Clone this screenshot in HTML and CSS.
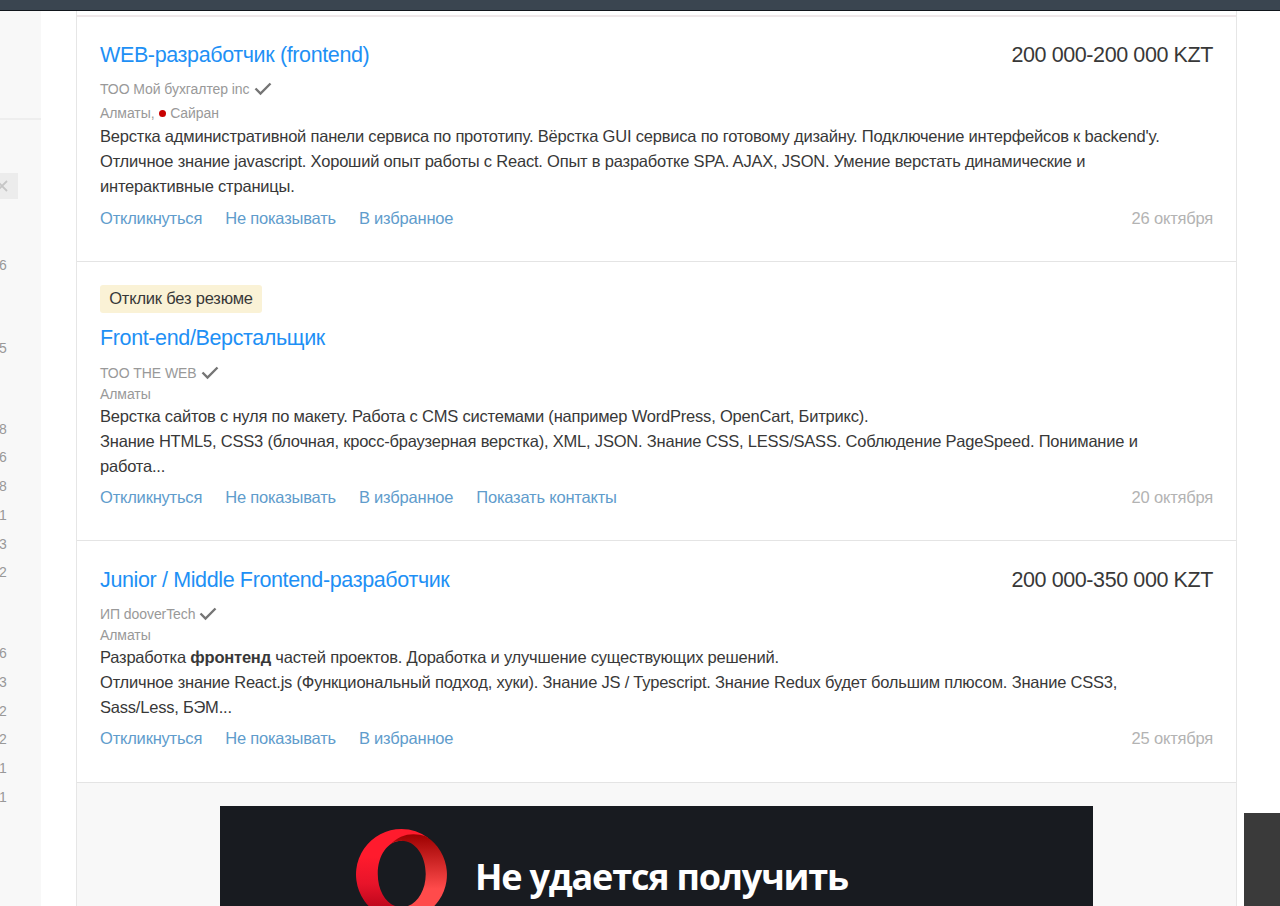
FILE: index.html
```html
<!DOCTYPE html>
<html lang="ru">
<head>
  <meta charset="UTF-8" />
  <meta name="viewport" content="width=device-width, initial-scale=1.0"/>
  <title>Вакансии</title>
  <link rel="stylesheet" href="styles.css">
</head>
<body>

  <header class="topbar"></header>

  <div class="page">
    <aside class="sidebar">
      <div class="sidebar-head"></div>
      <div class="chip">
        <svg width="12" height="12" viewBox="0 0 12 12"><path d="M1 1L11 11M11 1L1 11" stroke="#c6c6c6" stroke-width="1.8" fill="none"/></svg>
      </div>
      <ul class="counts counts-single"><li>6</li></ul>
      <ul class="counts counts-second"><li>5</li></ul>
      <ul class="counts counts-long">
        <li>8</li><li>6</li><li>8</li><li>1</li><li>3</li><li>2</li>
      </ul>
      <ul class="counts">
        <li>6</li><li>3</li><li>2</li><li>2</li><li>1</li><li>1</li>
      </ul>
    </aside>

    <main class="list">
      <article class="vacancy first">
        <div class="vacancy-head">
          <a class="title">WEB-разработчик (frontend)</a>
          <span class="salary">200 000-200 000 KZT</span>
        </div>
        <div class="company"><span>ТОО Мой бухгалтер inc</span>
          <svg class="check" width="18" height="14" viewBox="0 0 18 14"><path d="M1.5 6.5L6.5 11.5L16.5 1.5" /></svg>
        </div>
        <div class="location metro">Алматы, <i class="dot"></i> Сайран</div>
        <p class="text">
          Верстка административной панели сервиса по прототипу. Вёрстка GUI сервиса по готовому дизайну. Подключение интерфейсов к backend'y.<br>
          Отличное знание javascript. Хороший опыт работы с React. Опыт в разработке SPA. AJAX, JSON. Умение верстать динамические и<br>
          интерактивные страницы.
        </p>
        <div class="actions">
          <a>Откликнуться</a>
          <a>Не показывать</a>
          <a>В избранное</a>
          <span class="date">26 октября</span>
        </div>
      </article>

      <article class="vacancy second">
        <span class="tag">Отклик без резюме</span>
        <div class="vacancy-head">
          <a class="title">Front-end/Верстальщик</a>
        </div>
        <div class="company"><span>ТОО THE WEB</span>
          <svg class="check" width="18" height="14" viewBox="0 0 18 14"><path d="M1.5 6.5L6.5 11.5L16.5 1.5" /></svg>
        </div>
        <div class="location">Алматы</div>
        <p class="text">
          Верстка сайтов с нуля по макету. Работа с CMS системами (например WordPress, OpenCart, Битрикс).<br>
          Знание HTML5, CSS3 (блочная, кросс-браузерная верстка), XML, JSON. Знание CSS, LESS/SASS. Соблюдение PageSpeed. Понимание и<br>
          работа...
        </p>
        <div class="actions">
          <a>Откликнуться</a>
          <a>Не показывать</a>
          <a>В избранное</a>
          <a>Показать контакты</a>
          <span class="date">20 октября</span>
        </div>
      </article>

      <article class="vacancy third">
        <div class="vacancy-head">
          <a class="title">Junior / Middle Frontend-разработчик</a>
          <span class="salary">200 000-350 000 KZT</span>
        </div>
        <div class="company"><span>ИП dooverTech</span>
          <svg class="check" width="18" height="14" viewBox="0 0 18 14"><path d="M1.5 6.5L6.5 11.5L16.5 1.5" /></svg>
        </div>
        <div class="location">Алматы</div>
        <p class="text">
          Разработка <b>фронтенд</b> частей проектов. Доработка и улучшение существующих решений.<br>
          Отличное знание React.js (Функциональный подход, хуки). Знание JS / Typescript. Знание Redux будет большим плюсом. Знание CSS3,<br>
          Sass/Less, БЭМ...
        </p>
        <div class="actions">
          <a>Откликнуться</a>
          <a>Не показывать</a>
          <a>В избранное</a>
          <span class="date">25 октября</span>
        </div>
      </article>

      <div class="ad">
        <div class="banner">
          <svg class="opera" width="91" height="91" viewBox="0 0 92 92">
            <defs>
              <linearGradient id="left" x1="0" y1="0" x2="0" y2="1">
                <stop offset="0.3" stop-color="#ff1b2d"/>
                <stop offset="0.6" stop-color="#e8142a"/>
                <stop offset="1" stop-color="#a70014"/>
              </linearGradient>
              <linearGradient id="right" x1="0" y1="0" x2="0" y2="1">
                <stop offset="0" stop-color="#9c0000"/>
                <stop offset="0.7" stop-color="#ff4b4b"/>
              </linearGradient>
            </defs>
            <path fill="url(#left)" d="M46 0A46 46 0 1 0 77 80L46 79C32 79 22 64 22 45.5C22 27 32 12 46 12C57 8 66 8 73 9A46 46 0 0 0 46 0Z"/>
            <path fill="url(#right)" d="M35 15.5C44 5 58 3 71 7.500A46 46 0 0 1 77 80C68 86 56 86 46 79C60 79 70.500 64 70.500 45.500C70.500 27 60 12 46 12C42 12 38 13 35 15.500Z"/>
          </svg>
          <span class="banner-text">Не удается получить</span>
        </div>
      </div>
    </main>

    <div class="chat"></div>
  </div>

</body>
</html>
```
FILE: styles.css
```css
body {
  margin: 0;
  height: 906px;
  overflow: hidden;
  background: #fff;
  color: #383838;
  font-family: "Liberation Sans", Arial, sans-serif;
}
.topbar {
  height: 10px;
  background: #3a4550;
  border-bottom: 1px solid #11161c;
}
.page {
  display: flex;
  height: 895px;
  overflow: hidden;
}
.sidebar {
  width: 41px;
  margin-right: 35px;
  flex-shrink: 0;
  background: #f8f8f8;
}
.sidebar-head {
  height: 107px;
  border-bottom: 2px solid #eee;
}
.chip {
  display: flex;
  align-items: center;
  width: 18px;
  height: 26px;
  margin-top: 53px;
  background: #ececec;
}
.chip svg {
  margin-left: -4px;
}
.counts {
  list-style: none;
  margin: 0;
  padding: 0;
  font-size: 14px;
  line-height: 28.75px;
  color: #999;
}
.counts li {
  margin-left: -1px;
}
.counts-single {
  margin-top: 52px;
}
.counts-second {
  margin-top: 54px;
}
.counts-long {
  margin: 52px 0;
}
.list {
  width: 1159px;
  flex-shrink: 0;
  border-left: 1px solid #e6e6e6;
  border-right: 1px solid #e6e6e6;
}
.vacancy {
  box-sizing: border-box;
  padding: 24px 23px 0;
  border-bottom: 1px solid #e4e4e4;
}
.first {
  height: 247px;
  margin-top: 4px;
  border-top: 2px solid #efe8ea;
}
.second {
  height: 279px;
  padding-top: 23px;
}
.third {
  height: 242px;
  padding-top: 25px;
}
.vacancy-head {
  display: flex;
  justify-content: space-between;
  height: 28px;
  line-height: 28px;
  font-size: 21.5px;
}
.title {
  color: #1e90f5;
  letter-spacing: -0.37px;
}
.salary {
  letter-spacing: -0.4px;
}
.company {
  display: flex;
  align-items: center;
  gap: 4px;
  margin-top: 9px;
  height: 22px;
  font-size: 14px;
  letter-spacing: -0.07px;
  color: #999;
}
.check path {
  fill: none;
  stroke: #757575;
  stroke-width: 2.4;
}
.location {
  height: 20px;
  line-height: 20px;
  font-size: 14px;
  letter-spacing: -0.07px;
  color: #999;
}
.metro {
  height: 24px;
  line-height: 26px;
}
.dot {
  display: inline-block;
  width: 7px;
  height: 7px;
  margin: 0 0 1px 1px;
  border-radius: 50%;
  background: #c80000;
}
.text {
  margin: 0;
  font-size: 16.5px;
  letter-spacing: -0.205px;
  line-height: 24.8px;
  white-space: nowrap;
}
.actions {
  display: flex;
  gap: 23px;
  margin-top: 7px;
  line-height: 24px;
  font-size: 16.5px;
  letter-spacing: -0.2px;
  color: #609ccc;
}
.first .actions {
  margin-top: 8px;
}
.date {
  margin-left: auto;
  color: #b3b3b3;
}
.tag {
  display: block;
  width: 162px;
  height: 28px;
  margin-bottom: 11px;
  border-radius: 3px;
  background: #faf2d6;
  font-size: 16.5px;
  letter-spacing: -0.2px;
  line-height: 27px;
  text-align: center;
}
.second .company {
  margin-top: 10px;
}
.ad {
  height: 200px;
  padding: 23px 143px 0;
  background: #f8f8f8;
}
.banner {
  display: flex;
  height: 200px;
  background: #181b20;
}
.opera {
  margin: 23px 0 0 136px;
}
.banner-text {
  margin: 46px 0 0 28px;
  font-family: "Open Sans", "Noto Sans", sans-serif;
  font-weight: 700;
  font-size: 36px;
  letter-spacing: -1.2px;
  line-height: 50px;
  color: #fff;
  white-space: nowrap;
}
.chat {
  width: 40px;
  height: 100px;
  margin: 802px 0 0 7px;
  flex-shrink: 0;
  background: #3a3a3a;
}
```
